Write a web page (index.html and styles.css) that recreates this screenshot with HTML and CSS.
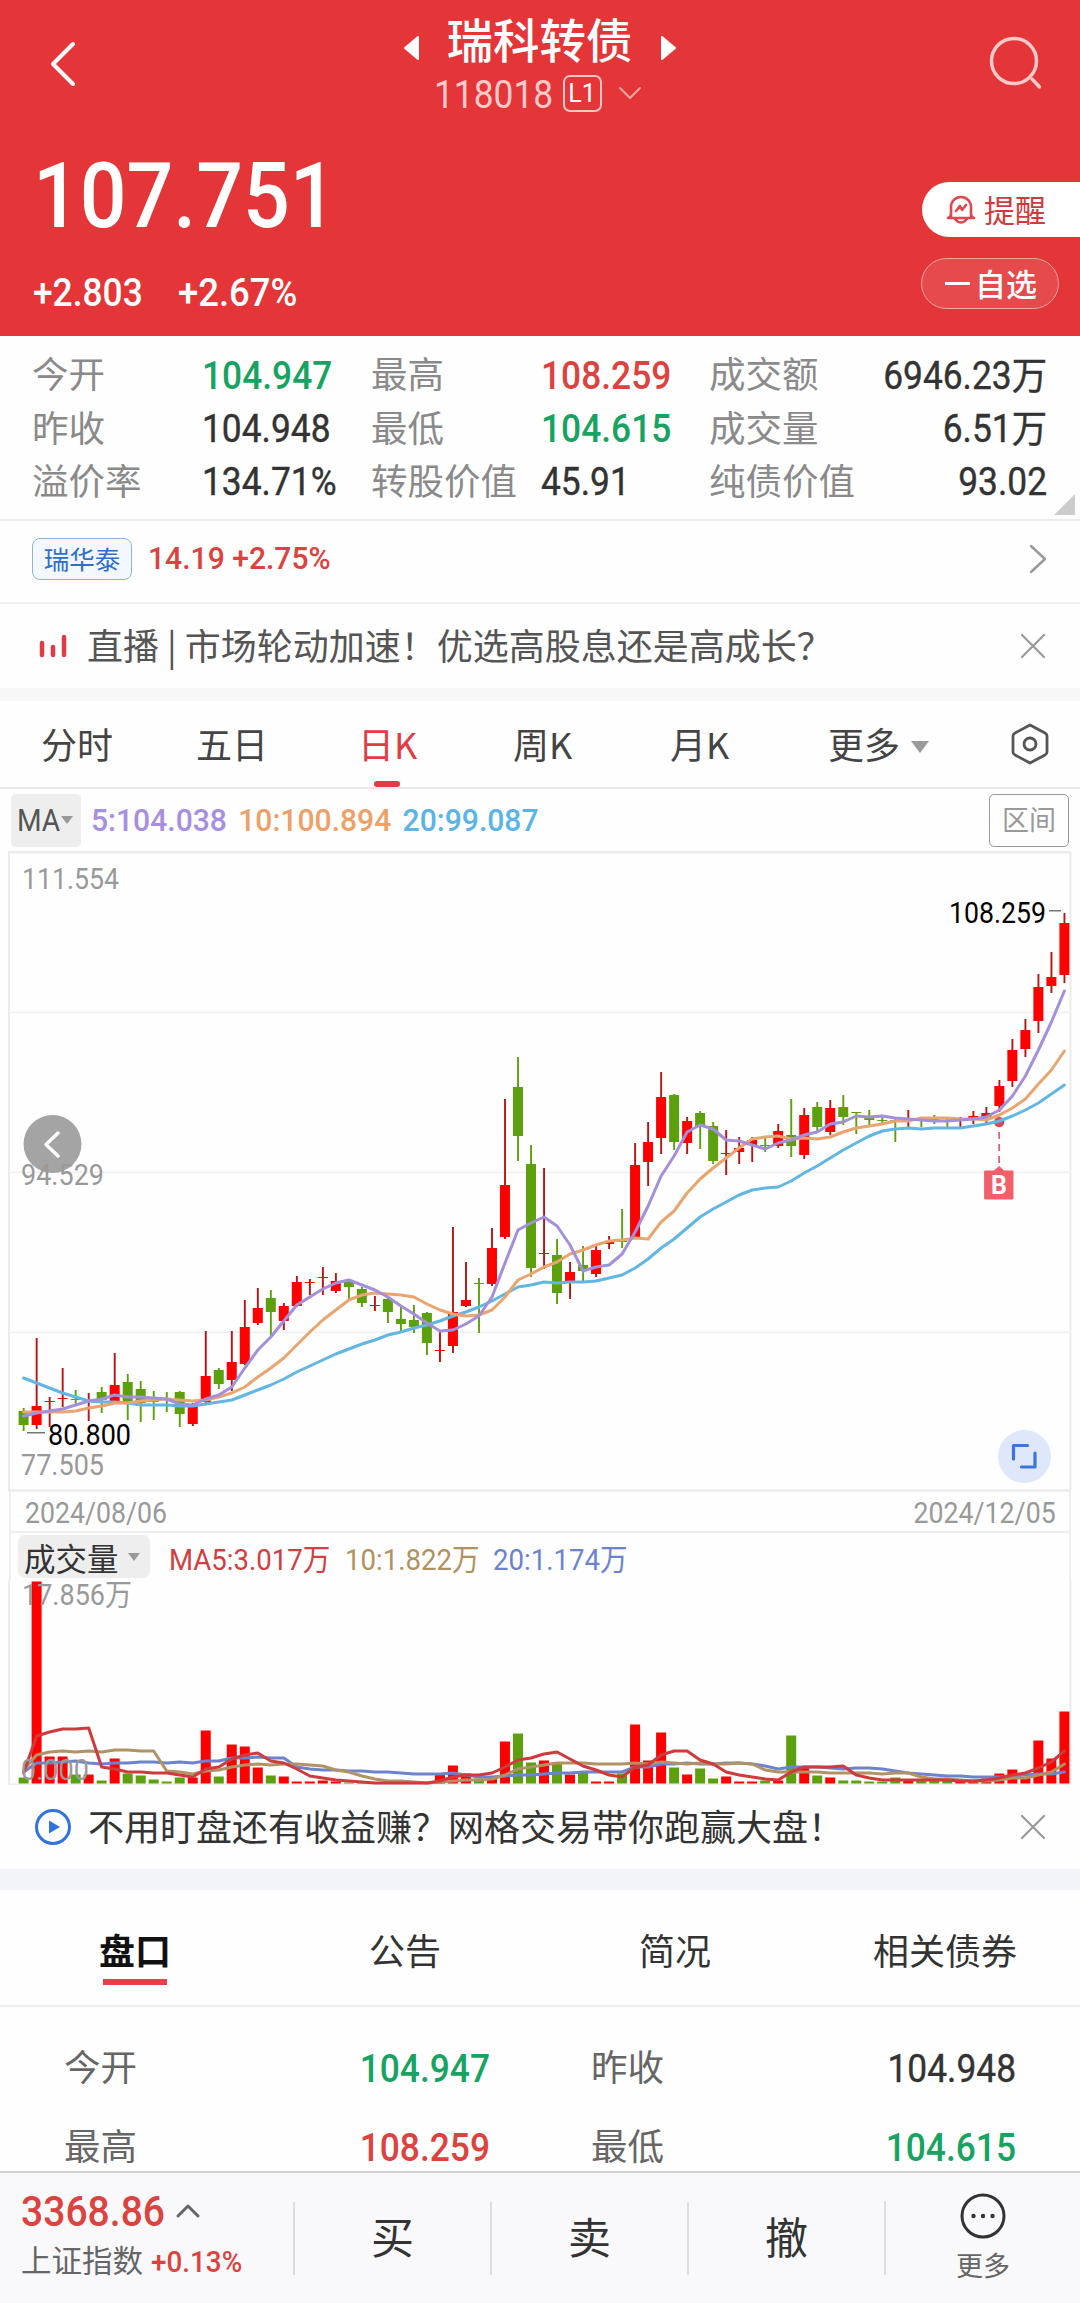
FILE: index.html
```html
<!DOCTYPE html>
<html lang="zh-CN">
<head>
    <meta charset="UTF-8">
    <title>瑞科转债</title>
    <link rel="stylesheet" href="styles.css">
</head>
<body>
<div class="header">
    <div class="nav">
        <svg class="back" width="26" height="44" viewBox="0 0 26 44"><path d="M23 2 L3 22 L23 42"/></svg>
        <div class="title">
            <div class="name">
                <svg width="17" height="26" viewBox="0 0 17 26"><path d="M15 2 V24 L2 13 Z"/></svg>
                <h1>瑞科转债</h1>
                <svg width="17" height="26" viewBox="0 0 17 26"><path d="M2 2 V24 L15 13 Z"/></svg>
            </div>
            <div class="code">
                <span class="num">118018</span>
                <span class="level">L1</span>
                <svg width="22" height="12" viewBox="0 0 22 12"><path d="M1 1 L11 11 L21 1"/></svg>
            </div>
        </div>
        <svg class="search" width="54" height="54" viewBox="0 0 54 54"><circle cx="25" cy="25" r="22.5"/><path d="M43 43 L50.500 51"/></svg>
    </div>
    <div class="quote">
        <div>
            <div class="price num">107.751</div>
            <div class="change"><span class="num">+2.803</span><span class="num">+2.67%</span></div>
        </div>
        <div class="actions">
            <div class="remind">
                <svg width="30" height="31" viewBox="0 0 30 31"><path d="M5 23 V13 A10 10 0 0 1 25 13 V23 M2 24 Q5 23 5 20 M28 24 Q25 23 25 20 M2 24 H28 M9 25 Q15 32 21 25 M10 17 L14 12 L16 16 L20 11"/></svg>
                <span>提醒</span>
            </div>
            <div class="optional"><i></i><span>自选</span></div>
        </div>
    </div>
</div>

<div class="stats">
    <span>今开</span><b class="num green">104.947</b><span>最高</span><b class="num red">108.259</b><span>成交额</span><b class="num right">6946.23万</b>
    <span>昨收</span><b class="num">104.948</b><span>最低</span><b class="num green">104.615</b><span>成交量</span><b class="num right">6.51万</b>
    <span>溢价率</span><b class="num">134.71%</b><span>转股价值</span><b class="num">45.91</b><span>纯债价值</span><b class="num right">93.02</b>
</div>

<div class="stock">
    <span class="tag">瑞华泰</span>
    <span class="num red">14.19 +2.75%</span>
    <svg width="18" height="30" viewBox="0 0 18 30"><path d="M2 2 L16 15 L2 28"/></svg>
</div>

<div class="news">
    <svg class="live" width="28" height="24" viewBox="0 0 28 24"><path d="M3 9 V21 M14 13 V21 M25 3 V21"/></svg>
    <p>直播 | 市场轮动加速！优选高股息还是高成长？</p>
    <svg class="close" width="26" height="26" viewBox="0 0 26 26"><path d="M2 2 L24 24 M24 2 L2 24"/></svg>
</div>

<div class="period">
    <span>分时</span>
    <span>五日</span>
    <span class="current">日K</span>
    <span>周K</span>
    <span>月K</span>
    <span>更多<i class="arrow"></i></span>
    <svg width="40" height="42" viewBox="0 0 40 42"><path d="M20 2 L35 10 Q37 11 37 13 V29 Q37 31 35 32 L20 40 L5 32 Q3 31 3 29 V13 Q3 11 5 10 Z"/><circle cx="20" cy="21" r="6"/></svg>
</div>

<div class="ma">
    <div class="ma-btn"><span class="num">MA</span><i class="arrow small"></i></div>
    <div class="ma-list num">
        <span class="ma5">5:104.038</span><span class="ma10">10:100.894</span><span class="ma20">20:99.087</span>
    </div>
    <div class="range">区间</div>
</div>

<svg class="kline" id="kline" width="1080" height="639" viewBox="0 851 1080 639"></svg>

<div class="dates"><span class="num">2024/08/06</span><span class="num right">2024/12/05</span></div>

<div class="volume">
    <div class="vol-head">
        <div class="vol-btn">成交量<i class="arrow small"></i></div>
        <span class="num vma5">MA5:3.017万</span>
        <span class="num vma10">10:1.822万</span>
        <span class="num vma20">20:1.174万</span>
    </div>
    <svg id="vol" width="1080" height="205" viewBox="0 1580 1080 205"></svg>
</div>

<div class="news promo">
    <svg class="play" width="38" height="38" viewBox="0 0 38 38"><circle cx="19" cy="19" r="16.500"/><path d="M15 12.500 L26 19 L15 25.500 Z"/></svg>
    <p>不用盯盘还有收益赚？网格交易带你跑赢大盘！</p>
    <svg class="close" width="26" height="26" viewBox="0 0 26 26"><path d="M2 2 L24 24 M24 2 L2 24"/></svg>
</div>

<div class="tabs">
    <span class="current">盘口</span>
    <span>公告</span>
    <span>简况</span>
    <span>相关债券</span>
</div>

<div class="detail">
    <span>今开</span><b class="num green">104.947</b><span>昨收</span><b class="num">104.948</b>
    <span>最高</span><b class="num red">108.259</b><span>最低</span><b class="num green">104.615</b>
</div>

<div class="footer">
    <div class="index">
        <div class="point"><span class="num">3368.86</span><svg width="24" height="14" viewBox="0 0 24 14"><path d="M2 12 L12 2 L22 12"/></svg></div>
        <div class="index-name">上证指数<span class="num red">+0.13%</span></div>
    </div>
    <div class="btn">买</div>
    <div class="btn">卖</div>
    <div class="btn">撤</div>
    <div class="more">
        <svg width="48" height="48" viewBox="0 0 48 48"><circle class="ring" cx="24" cy="24" r="21"/><circle cx="14.500" cy="24" r="2.200"/><circle cx="24" cy="24" r="2.200"/><circle cx="33.500" cy="24" r="2.200"/></svg>
        <span>更多</span>
    </div>
</div>

<script src="chart.js"></script>
</body>
</html>
```
FILE: styles.css
```css
*{
    margin: 0;
    padding: 0;
    box-sizing: border-box;
}
body{
    width: 1080px;
    height: 2303px;
    overflow: hidden;
    background-color: #fefefe;
    color: #333;
    font-family: "Noto Sans CJK SC", sans-serif;
    font-size: 36px;
}
svg{
    display: block;
    flex: none;
    overflow: visible;
    fill: none;
    stroke-linecap: round;
    stroke-linejoin: round;
}
i, b{
    font-style: normal;
    font-weight: 400;
}
/* 数字统一压窄 */
.num{
    display: inline-block;
    font-family: Roboto, "Noto Sans CJK SC", sans-serif;
    transform: scaleX(.93);
    transform-origin: left center;
    white-space: nowrap;
}
.num.right{
    transform-origin: right center;
    text-align: right;
}
.red{
    color: #dc423e;
}
.green{
    color: #17a362;
}
.arrow{
    display: inline-block;
    border: 9px solid transparent;
    border-top: 12px solid #999;
    border-bottom: 0;
}
.arrow.small{
    border-width: 8px 6.5px 0;
}

/* 头部 */
.header{
    height: 336px;
    background-color: #e43638;
    color: #fff;
}
.nav{
    display: flex;
    justify-content: space-between;
    height: 130px;
    padding: 0 37px 0 50px;
}
.nav svg{
    stroke: #fff;
    stroke-width: 4;
}
.nav .back{
    margin-top: 42px;
}
.nav .search{
    margin-top: 36px;
    stroke: #ffc9c9;
    stroke-width: 3.5;
}
.title{
    padding: 12px 0 0 14px;
}
.name{
    display: flex;
    align-items: center;
    justify-content: center;
    gap: 27px;
    height: 56px;
}
.name svg{
    margin-top: 16px;
    fill: #fff;
    stroke-width: 2;
}
.name h1{
    height: 56px;
    font-size: 46.5px;
    font-weight: 500;
    line-height: 52px;
}
.code{
    display: flex;
    align-items: center;
    height: 50px;
    padding-left: 31px;
    font-size: 38px;
}
.code .num{
    width: 119px;
    margin-right: 10px;
    padding-top: 3px;
    color: #ffcaca;
}
.code .level{
    width: 39px;
    height: 37px;
    margin-right: 17px;
    border: 2px solid #f9c4c4;
    border-radius: 7px;
    font: 25px/34px Roboto, sans-serif;
    text-align: center;
}
.code svg{
    stroke: #f5a5a5;
    stroke-width: 2;
}
.quote{
    display: flex;
    justify-content: space-between;
}
.price{
    display: block;
    height: 120px;
    padding-left: 36px;
    font-size: 90px;
    font-weight: 500;
    line-height: 133px;
    transform: scaleX(.915);
}
.change{
    display: flex;
    padding-left: 33px;
    font-size: 38px;
    font-weight: 500;
    line-height: 86px;
}
.change .num{
    width: 145px;
}
.change .num + .num{
    transform: scaleX(.96);
}
.actions{
    display: flex;
    flex-direction: column;
    align-items: flex-end;
    gap: 21px;
    padding-top: 52px;
    font-size: 31px;
}
.actions span{
    margin-top: -3px;
}
.remind{
    display: flex;
    align-items: center;
    gap: 8px;
    width: 158px;
    height: 55px;
    padding-left: 24px;
    border-radius: 28px 0 0 28px;
    background-color: #fff;
    color: #cf3b3d;
}
.remind svg{
    stroke: #e0484f;
    stroke-width: 2.6;
}
.optional{
    display: flex;
    align-items: center;
    gap: 5px;
    width: 138px;
    height: 51px;
    margin-right: 21px;
    padding-left: 23px;
    border: 1px solid #f3a3a3;
    border-radius: 26px;
    background-color: #e74a4c;
    font-weight: 500;
}
.optional i{
    width: 25px;
    height: 3px;
    background-color: #fff;
}

/* 行情 */
.stats{
    display: grid;
    grid-template-columns: 170px 169px 170px 168px 140px 198px;
    grid-auto-rows: 53.4px;
    align-items: center;
    position: relative;
    height: 185px;
    padding: 12px 32px;
    border-bottom: 2px solid #ececec;
    line-height: 53px;
    white-space: nowrap;
}
.stats::after{
    content: "";
    position: absolute;
    right: 5px;
    bottom: 4px;
    border-left: 21px solid transparent;
    border-bottom: 21px solid #ccc;
}
.stats span{
    margin-top: -4px;
    color: #8a8a8a;
    font-size: 36.5px;
}
.stats .num, .detail .num{
    padding-top: 3px;
    font-size: 38px;
    font-weight: 500;
}
.stats .num:not(.red):not(.green), .detail .num:not(.red):not(.green){
    font-weight: 400;
    -webkit-text-stroke: .4px #333;
}
.stock{
    display: flex;
    align-items: center;
    height: 83px;
    padding: 0 33px 6px 32px;
    border-bottom: 2px solid #f0f0f0;
    font-size: 31px;
}
.stock .num{
    font-weight: 500;
    transform: scaleX(.97);
}
.tag{
    width: 100px;
    height: 42px;
    margin-right: 16px;
    border: 1px solid #8fb3dc;
    border-radius: 8px;
    background-color: #f3f8fe;
    color: #2f6fc9;
    font-size: 25.5px;
    line-height: 37px;
    text-align: center;
}
.stock svg{
    margin-left: auto;
    stroke: #999;
    stroke-width: 2.5;
}
.news{
    display: flex;
    align-items: center;
    height: 84px;
    padding: 0 34px 0 39px;
    color: #555;
}
.news p{
    height: 56px;
    margin-left: 20px;
    line-height: 53px;
}
.live{
    stroke: #e33b45;
    stroke-width: 4.5;
}
.close{
    margin-left: auto;
    stroke: #999;
    stroke-width: 2.2;
}

/* 周期切换 */
.period{
    display: grid;
    grid-template-columns: 155px 162px 155px 157px 158px 182px 40px;
    align-items: center;
    height: 101px;
    padding-left: 41px;
    border-top: 13px solid #f7f7f7;
    border-bottom: 2px solid #e9e9e9;
    color: #444;
    line-height: 84px;
}
.period span{
    height: 86px;
}
.period .current{
    position: relative;
    color: #e33b45;
}
.period .current::after{
    content: "";
    position: absolute;
    left: 16px;
    bottom: 0;
    width: 26px;
    height: 6px;
    border-radius: 3px;
    background-color: #e33b45;
}
.period .arrow{
    margin-left: 11px;
    vertical-align: 6px;
}
.period svg{
    stroke: #555;
    stroke-width: 2.8;
}

/* 均线 */
.ma{
    display: flex;
    align-items: center;
    height: 62px;
    padding: 0 11px;
    font-size: 32px;
}
.ma-btn{
    display: flex;
    align-items: center;
    width: 70px;
    height: 53px;
    padding-left: 6px;
    border-radius: 5px;
    background-color: #eee;
    color: #555;
}
.ma-btn .num{
    width: 44px;
    transform: scaleX(.88);
}
.ma-list{
    display: flex;
    gap: 12px;
    margin-left: 10px;
    font-weight: 500;
    transform: scaleX(.94);
}
.ma5{ color: #a78fe0; }
.ma10{ color: #eda168; }
.ma20{ color: #5ab4e5; }
.range{
    width: 80px;
    height: 53px;
    margin-left: auto;
    border: 1px solid #999;
    border-radius: 5px;
    color: #999;
    font-size: 27px;
    line-height: 48px;
    text-align: center;
}

/* K线图 */
.kline text, .volume text{
    font-family: Roboto, "Noto Sans CJK SC", sans-serif;
    font-size: 29.5px;
    fill: #999;
}
.kline text.mark{
    fill: #000;
}
.kline text.flag{
    font-size: 25px;
    font-weight: 700;
    fill: #fff;
}
.dates{
    display: flex;
    justify-content: space-between;
    height: 43px;
    margin: 0 9px;
    padding: 0 13px 0 14px;
    border: 2px solid #eee;
    border-top: 0;
    color: #999;
    font-size: 30px;
    line-height: 45px;
}
.dates .num{
    transform: scaleX(.89);
}
.volume{
    height: 252px;
}
.vol-head{
    display: flex;
    align-items: center;
    height: 47px;
    margin: 0 9px;
    padding-left: 7px;
    border: 2px solid #eee;
    border-width: 0 2px;
    font-size: 30px;
}
.vol-btn{
    display: flex;
    align-items: center;
    gap: 9px;
    width: 132px;
    height: 43px;
    margin-right: 19px;
    padding-left: 6px;
    border-radius: 7px;
    background-color: #eee;
    font-size: 31.5px;
}
.vol-head .num{
    width: 176px;
    transform: scaleX(.92);
}
.vol-head .vma5{ color: #d03f42; }
.vol-head .vma10{
    width: 148px;
    color: #b0925f;
}
.vol-head .vma20{ color: #6b83cd; }

/* 底部资讯与盘口 */
.promo{
    padding-left: 34px;
    color: #333;
}
.promo p{
    margin-left: 16px;
}
.play{
    stroke: #2f74dc;
    stroke-width: 3;
}
.play path{
    fill: #2f74dc;
    stroke: none;
}
.tabs{
    display: flex;
    height: 138px;
    border-top: 21px solid #f2f4f9;
    border-bottom: 2px solid #eef0f0;
    line-height: 119px;
}
.tabs span{
    position: relative;
    flex: 1;
    text-align: center;
}
.tabs .current{
    color: #111;
    font-weight: 700;
}
.tabs .current::after{
    content: "";
    position: absolute;
    left: 103px;
    bottom: 20px;
    width: 64px;
    height: 6px;
    background-color: #e8404a;
}
.detail{
    display: grid;
    grid-template-columns: 150px 276px 252px 274px;
    grid-auto-rows: 79px;
    align-items: center;
    height: 164px;
    padding: 21px 64px 0;
    color: #666;
    line-height: 46px;
}
.detail span{
    margin-top: -4px;
    font-size: 36.5px;
}
.detail span:nth-of-type(even){
    padding-left: 101px;
}
.detail .num{
    text-align: right;
    transform-origin: right center;
}
.detail .num:not(.red):not(.green){
    color: #333;
}

/* 底栏 */
.footer{
    display: flex;
    align-items: center;
    height: 132px;
    border-top: 2px solid #d3d3d3;
    background-color: #f9f9fb;
}
.index{
    width: 293px;
    padding: 0 0 14px 21px;
}
.point{
    display: flex;
    align-items: center;
    height: 56px;
    color: #dc423e;
    font-size: 42px;
    font-weight: 500;
}
.point svg{
    margin-left: 0;
    stroke: #666;
    stroke-width: 3;
}
.index-name{
    height: 40px;
    color: #666;
    font-size: 30.5px;
    line-height: 40px;
}
.index-name .num{
    margin-left: 8px;
    font-size: 29px;
    font-weight: 500;
    transform: scaleX(.96);
}
.btn{
    width: 197px;
    height: 73px;
    border-left: 2px solid #dedede;
    font-size: 43px;
    line-height: 66px;
    text-align: center;
}
.more{
    display: flex;
    flex: 1;
    flex-direction: column;
    align-items: center;
    height: 74px;
    border-left: 2px solid #dedede;
    color: #666;
    font-size: 27px;
    line-height: 40px;
}
.more svg{
    margin-top: -9px;
    fill: #333;
}
.more .ring{
    fill: none;
    stroke: #333;
    stroke-width: 3;
}
.more span{
    margin-top: 5px;
}
```
FILE: chart.js
```js
var RED = "#fe0000", GREEN = "#5ca00e";
var left = 23.6, step = 13.01;

// 每根K线: 涨跌, 实体上沿, 实体下沿, 最高, 最低
var candles = [
  ["g",1411,1425,1408,1431],["r",1406,1425,1338,1429],["r",1401,1402,1397,1427],["r",1398,1399,1368,1407],["g",1399,1400,1390,1404],
  ["r",1400,1401,1393,1421],["g",1392,1400,1387,1413],["r",1385,1401,1353,1404],["g",1382,1402,1374,1420],["g",1389,1403,1381,1422],
  ["g",1401,1402,1391,1420],["g",1399,1400,1392,1412],["g",1392,1414,1391,1427],["r",1404,1424,1403,1426],["r",1376,1402,1331,1405],
  ["g",1370,1384,1368,1389],["r",1362,1380,1331,1391],["r",1327,1364,1300,1365],["r",1308,1323,1288,1325],["g",1298,1312,1290,1336],
  ["r",1306,1321,1303,1330],["r",1282,1306,1276,1307],["r",1282,1283,1279,1295],["r",1277,1278,1267,1295],["r",1281,1291,1273,1293],
  ["g",1281,1287,1279,1299],["g",1289,1303,1287,1307],["r",1305,1306,1296,1311],["g",1299,1312,1298,1323],["g",1319,1324,1307,1331],
  ["g",1320,1327,1305,1333],["g",1313,1343,1312,1355],["r",1350,1351,1332,1362],["r",1312,1346,1227,1353],["r",1300,1306,1262,1307],
  ["g",1283,1284,1278,1333],["r",1248,1284,1228,1286],["r",1185,1237,1099,1239],["g",1087,1136,1057,1161],["g",1164,1268,1145,1277],
  ["r",1253,1254,1168,1269],["g",1255,1293,1239,1304],["r",1272,1281,1262,1299],["g",1265,1271,1246,1282],["r",1250,1274,1245,1277],
  ["r",1242,1244,1236,1249],["g",1241,1242,1209,1248],["r",1165,1239,1143,1239],["r",1142,1162,1122,1186],["r",1097,1138,1072,1154],
  ["g",1095,1142,1094,1150],["r",1121,1143,1117,1154],["g",1113,1126,1111,1149],["g",1126,1161,1122,1164],["r",1153,1154,1130,1175],
  ["r",1148,1152,1137,1164],["r",1140,1145,1137,1162],["g",1145,1146,1137,1152],["r",1131,1146,1124,1148],["g",1135,1146,1099,1157],
  ["r",1115,1155,1108,1159],["g",1107,1127,1102,1131],["r",1108,1132,1100,1135],["g",1107,1117,1095,1125],["g",1112,1113,1112,1134],
  ["g",1118,1120,1110,1127],["g",1120,1121,1116,1123],["g",1120,1121,1118,1142],["r",1119,1120,1110,1129],["g",1120,1121,1118,1127],
  ["g",1119,1120,1115,1124],["g",1120,1121,1117,1127],["r",1120,1121,1117,1127],["r",1116,1119,1111,1124],["r",1113,1117,1107,1123],
  ["r",1086,1106,1080,1112],["r",1050,1081,1039,1087],["r",1030,1049,1019,1057],["r",987,1021,974,1033],["r",977,986,952,993],
  ["r",923,975,913,983]
];
var ma5 = [1416,1413,1411,1409,1405,1401,1399,1395,1397,1397,1398,1399,1404,1405,1399,1395,1387,1368,1350,1337,1321,1305,1297,1289,1283,1280,1285,1290,1297,1306,1314,1323,1331,1330,1324,1316,1297,1263,1230,1223,1217,1226,1245,1271,1267,1265,1254,1232,1206,1176,1156,1132,1125,1129,1140,1141,1145,1149,1143,1140,1135,1132,1124,1122,1116,1117,1116,1118,1119,1120,1121,1121,1120,1119,1117,1110,1096,1076,1050,1022,991];
var ma10 = [1412,1412,1412,1412,1411,1408,1406,1403,1403,1401,1400,1399,1400,1401,1400,1397,1393,1387,1377,1368,1358,1345,1332,1320,1310,1300,1295,1293,1294,1295,1297,1304,1310,1314,1316,1315,1310,1297,1280,1274,1267,1262,1254,1250,1245,1241,1240,1238,1239,1222,1211,1193,1179,1168,1158,1148,1139,1137,1136,1139,1138,1139,1137,1132,1128,1126,1124,1121,1121,1118,1118,1118,1119,1119,1120,1115,1108,1099,1084,1070,1051];
var ma20 = [1378,1383,1388,1393,1397,1401,1402,1402,1403,1405,1405,1405,1406,1406,1404,1402,1400,1395,1390,1385,1379,1372,1366,1360,1354,1349,1344,1340,1335,1332,1328,1325,1321,1316,1312,1307,1301,1294,1287,1285,1282,1283,1282,1282,1281,1278,1275,1268,1259,1248,1239,1228,1217,1209,1202,1195,1190,1188,1187,1181,1173,1166,1158,1150,1143,1136,1131,1129,1128,1129,1128,1128,1128,1126,1124,1121,1116,1110,1103,1094,1085];

var vols = [6,202,27,27,9,9,3,25,10,8,4,2,6,6,53,7,39,37,16,8,7,2,2,3,2,1,1,1,1,1,1,1,9,18,10,5,6,42,50,21,23,20,9,11,2,2,10,59,23,51,16,9,15,5,7,2,2,3,3,48,17,8,6,3,3,2,2,6,3,3,3,3,3,3,5,10,14,6,43,25,72];
var vma5 = [1773,1736,1732,1729,1729,1728,1767,1769,1772,1772,1773,1773,1775,1777,1769,1767,1759,1755,1753,1761,1763,1769,1776,1778,1780,1781,1782,1783,1783,1783,1783,1783,1781,1777,1775,1775,1773,1767,1760,1758,1754,1752,1759,1766,1770,1775,1777,1767,1765,1755,1751,1751,1760,1764,1772,1775,1777,1779,1780,1772,1767,1767,1767,1766,1775,1778,1780,1780,1780,1780,1780,1780,1781,1781,1780,1778,1775,1773,1768,1762,1751];
var vma10 = [1770,1755,1752,1751,1752,1751,1752,1750,1750,1751,1751,1771,1772,1774,1771,1770,1767,1765,1764,1765,1764,1764,1765,1766,1770,1772,1776,1779,1781,1781,1782,1783,1782,1781,1780,1780,1779,1775,1769,1767,1765,1763,1763,1763,1764,1764,1764,1763,1764,1762,1763,1764,1763,1764,1764,1763,1764,1770,1772,1772,1772,1772,1773,1773,1773,1773,1774,1773,1773,1777,1779,1779,1780,1781,1781,1780,1778,1778,1775,1772,1764];
var vma20 = [1772,1763,1763,1762,1761,1763,1764,1763,1763,1762,1762,1763,1762,1763,1761,1761,1758,1758,1757,1758,1758,1767,1769,1770,1770,1771,1771,1772,1772,1773,1774,1774,1774,1773,1775,1777,1777,1776,1775,1775,1774,1773,1773,1772,1772,1772,1772,1767,1767,1764,1764,1763,1764,1764,1763,1763,1764,1766,1769,1767,1767,1767,1768,1769,1768,1768,1769,1771,1773,1774,1775,1776,1776,1777,1777,1777,1776,1775,1774,1774,1772];

function rect(x, y, w, h, color) {
  return '<rect x="' + x + '" y="' + y + '" width="' + w + '" height="' + h + '" fill="' + color + '"/>';
}
function line(values, color) {
  var points = values.map(function (y, i) {
    return (left + i * step).toFixed(1) + "," + y;
  });
  return '<polyline points="' + points.join(" ") + '" stroke="' + color + '" stroke-width="3"/>';
}
function label(x, y, width, text, cls) {
  return '<text x="' + x + '" y="' + y + '" textLength="' + width + '" lengthAdjust="spacingAndGlyphs" class="' + (cls || "") + '">' + text + '</text>';
}

function drawKline() {
  var html = rect(8, 851, 1063, 2.5, "#ebebeb") + rect(8, 851, 2, 639, "#ececec") + rect(1069.5, 851, 2, 639, "#ececec") + rect(8, 1489.5, 1063, 2, "#e8e8e8");
  [1011.5, 1171.5, 1331.5].forEach(function (y) {
    html += rect(10, y, 1060, 1.5, "#f0f0f0");
  });
  // 左侧翻页按钮
  html += '<circle cx="52.500" cy="1144" r="29" fill="#a4a4a4"/><path d="M58 1133 L46 1144.500 L58 1156" stroke="#fff" stroke-width="3.500"/>';
  candles.forEach(function (c, i) {
    var x = left + i * step;
    html += rect(x - 0.9, c[3], 1.9, c[4] - c[3], c[0] == "r" ? "#b81414" : GREEN);
    html += rect(x - 5, c[1], 10, Math.max(c[2] - c[1], 1), c[0] == "r" ? RED : GREEN);
  });
  // 买入标记
  html += '<circle cx="999.200" cy="1122" r="5.200" fill="#d84b5c"/><path d="M999.200 1132 V1163" stroke="#d0647a" stroke-width="1.800" stroke-dasharray="7 5" stroke-linecap="butt"/>';
  html += '<path d="M985 1171 H994 L999.200 1166.500 L1004 1171 H1013 V1199 H985 Z" fill="#f0606a" stroke="#f0606a"/><text class="flag" x="991" y="1194">B</text>';
  html += line(ma20, "#61b6e4") + line(ma10, "#e9a56f") + line(ma5, "#a48fdb");
  html += rect(27, 1432, 18, 1.5, "#777") + rect(1049, 910, 12, 1.5, "#777");
  html += label(22, 889, 97, "111.554") + label(21, 1185, 83, "94.529") + label(21, 1475, 83, "77.505");
  html += label(48, 1445, 83, "80.800", "mark") + label(949, 923, 97, "108.259", "mark");
  html += '<circle cx="1024.500" cy="1456.500" r="26.500" fill="#dfe8fb"/><path d="M1013.500 1459 V1445.500 H1027.500 M1035 1453 V1467 H1021.500" stroke="#3b76dc" stroke-width="3.200"/>';
  document.getElementById("kline").innerHTML = html;
}

function drawVolume() {
  var html = rect(8, 1580, 2, 204, "#ececec") + rect(1069.5, 1580, 2, 204, "#ececec") + rect(8, 1783.5, 1063, 1.5, "#ececec");
  vols.forEach(function (v, i) {
    html += rect(left + i * step - 5, 1783.5 - v, 10, v, candles[i][0] == "r" ? RED : GREEN);
  });
  html += line(vma20, "#6d84cc") + line(vma10, "#b19265") + line(vma5, "#cf3a3c");
  html += label(22, 1605, 110, "17.856万") + label(21, 1780, 68, "0.000");
  document.getElementById("vol").innerHTML = html;
}

drawKline();
drawVolume();
```
